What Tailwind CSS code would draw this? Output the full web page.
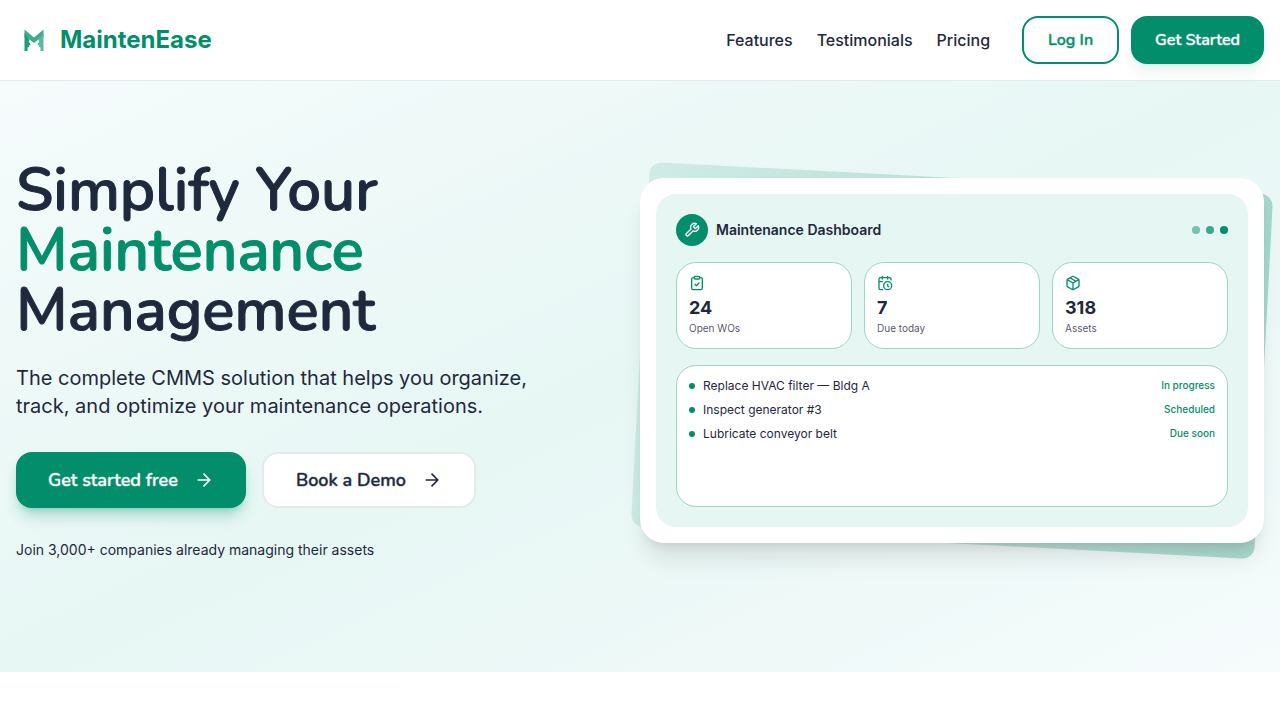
<!DOCTYPE html>
<html lang="en">
<head>
  <meta charset="UTF-8" />
  <meta name="viewport" content="width=device-width, initial-scale=1.0"/>
  <title>MaintenEase</title>
  <script src="https://cdn.jsdelivr.net/npm/@tailwindcss/browser@4"></script>
</head>
<body class="bg-white text-[#1f293d] font-['Inter',sans-serif] overflow-x-hidden">
  <header class="h-20 px-4 flex items-center justify-between bg-white relative z-10 shadow-[0_1px_0_#dfeeea]">
    <a href="#" class="flex items-center gap-2 text-2xl font-bold text-[#028e6b]">
      <svg class="size-9" viewBox="0 0 36 36" aria-hidden="true">
        <path fill="#3fab8f" d="M8.5 7.5 18 15.5l9.5-8V15l-5 2.5L18 21l-4.5-3.5-5-2.5z"/>
        <path fill="#1c9a79" d="M8.5 11v18h3v-3.5l2-1-1-1.5 2 .5-.5-2.5-1.5-1 1-2-2-2.5z"/>
        <path fill="#5cb8a0" d="M27.5 11v18h-3v-3.5l-2-1 1-1.5-2 .5.5-2.5 1.5-1-1-2 2-2.5z"/>
      </svg>
      MaintenEase
    </a>
    <div class="flex items-center gap-8">
      <nav class="flex gap-6 font-medium">
        <a href="#features">Features</a>
        <a href="#testimonials">Testimonials</a>
        <a href="#pricing">Pricing</a>
      </nav>
      <div class="flex gap-3 font-['Nunito','Lato',sans-serif] font-semibold">
        <button class="h-12 px-6 rounded-2xl border-2 border-[#028e6b] text-[#028e6b] [-webkit-text-stroke:1px_#028e6b66]">Log In</button>
        <button class="h-12 px-6 rounded-2xl bg-[#028e6b] text-white shadow-lg shadow-[#028e6b]/10 [-webkit-text-stroke:1px_#ffffff66]">Get Started</button>
      </div>
    </div>
  </header>

  <main class="px-4 pt-20 pb-28 bg-linear-to-br from-[#f6fbfc] via-[#e6f7f4] via-50% to-[#f6fbfc]">
    <div class="grid grid-cols-2 items-center">
      <section>
        <h1 class="font-['Nunito','Lato',sans-serif] text-6xl leading-none font-semibold [-webkit-text-stroke:1px]">Simplify Your<br/><span class="text-[#028e6b]">Maintenance</span><br/>Management</h1>
        <p class="mt-6 text-xl max-w-[540px]">The complete CMMS solution that helps you organize, track, and optimize your maintenance operations.</p>
        <div class="mt-8 flex gap-4 font-['Nunito','Lato',sans-serif] text-lg font-semibold">
          <button class="h-14 px-8 flex items-center gap-4 rounded-2xl bg-[#028e6b] text-white shadow-lg shadow-[#028e6b]/30 [-webkit-text-stroke:1px_#ffffff66]">
            Get started free
            <svg class="size-5" viewBox="0 0 24 24" fill="none" stroke="currentColor" stroke-width="2" stroke-linecap="round" stroke-linejoin="round" aria-hidden="true"><path d="M5 12h14M12 5l7 7-7 7"/></svg>
          </button>
          <button class="h-14 px-8 flex items-center gap-4 rounded-2xl bg-white border-2 border-[#e2ecea] [-webkit-text-stroke:1px_#1f293d66]">
            Book a Demo
            <svg class="size-5" viewBox="0 0 24 24" fill="none" stroke="currentColor" stroke-width="2" stroke-linecap="round" stroke-linejoin="round" aria-hidden="true"><path d="M5 12h14M12 5l7 7-7 7"/></svg>
          </button>
        </div>
        <p class="mt-8 text-sm">Join 3,000+ companies already managing their assets</p>
      </section>

      <section class="relative">
        <div class="absolute inset-0 rotate-3 rounded-xl bg-linear-to-r from-[#028e6b]/12 to-[#028e6b]/30"></div>
        <div class="relative p-4 rounded-3xl bg-white shadow-[0_20px_25px_-5px_#0000001a,0_8px_10px_-6px_#0000001a]">
          <div class="aspect-video p-5 flex flex-col gap-4 rounded-[20px] bg-[#e6f6f2]">
            <div class="flex items-center gap-2">
              <span class="size-8 rounded-full bg-[#028e6b] text-white flex items-center justify-center">
                <svg class="size-4" viewBox="0 0 24 24" fill="none" stroke="currentColor" stroke-width="2" stroke-linecap="round" stroke-linejoin="round" aria-hidden="true"><path d="M14.7 6.3a1 1 0 0 0 0 1.4l1.6 1.6a1 1 0 0 0 1.4 0l3.77-3.77a6 6 0 0 1-7.94 7.94l-6.91 6.91a2.12 2.12 0 0 1-3-3l6.91-6.91a6 6 0 0 1 7.94-7.94l-3.76 3.76z"/></svg>
              </span>
              <h2 class="text-sm font-semibold">Maintenance Dashboard</h2>
              <div class="ml-auto flex gap-1.5">
                <span class="size-2 rounded-full bg-[#028e6b]/50"></span>
                <span class="size-2 rounded-full bg-[#028e6b]/75"></span>
                <span class="size-2 rounded-full bg-[#028e6b]"></span>
              </div>
            </div>

            <div class="grid grid-cols-3 gap-3">
              <div class="p-3 rounded-[20px] bg-white border border-[#9bd6c6]">
                <svg class="size-4 text-[#028e6b]" viewBox="0 0 24 24" fill="none" stroke="currentColor" stroke-width="2" stroke-linecap="round" stroke-linejoin="round" aria-hidden="true"><rect width="8" height="4" x="8" y="2" rx="1"/><path d="M16 4h2a2 2 0 0 1 2 2v14a2 2 0 0 1-2 2H6a2 2 0 0 1-2-2V6a2 2 0 0 1 2-2h2M9 14l2 2 4-4"/></svg>
                <div class="mt-1 text-lg leading-[26px] font-bold">24</div>
                <div class="text-[10px] leading-[15px] text-[#1f293d]/80">Open WOs</div>
              </div>
              <div class="p-3 rounded-[20px] bg-white border border-[#9bd6c6]">
                <svg class="size-4 text-[#028e6b]" viewBox="0 0 24 24" fill="none" stroke="currentColor" stroke-width="2" stroke-linecap="round" stroke-linejoin="round" aria-hidden="true"><path d="M21 7.5V6a2 2 0 0 0-2-2H5a2 2 0 0 0-2 2v14a2 2 0 0 0 2 2h3.5M16 2v4M8 2v4M3 10h5M17.5 17.5 16 16.3V14"/><circle cx="16" cy="16" r="6"/></svg>
                <div class="mt-1 text-lg leading-[26px] font-bold">7</div>
                <div class="text-[10px] leading-[15px] text-[#1f293d]/80">Due today</div>
              </div>
              <div class="p-3 rounded-[20px] bg-white border border-[#9bd6c6]">
                <svg class="size-4 text-[#028e6b]" viewBox="0 0 24 24" fill="none" stroke="currentColor" stroke-width="2" stroke-linecap="round" stroke-linejoin="round" aria-hidden="true"><path d="M11 21.73a2 2 0 0 0 2 0l7-4A2 2 0 0 0 21 16V8a2 2 0 0 0-1-1.73l-7-4a2 2 0 0 0-2 0l-7 4A2 2 0 0 0 3 8v8a2 2 0 0 0 1 1.73zM12 22V12M3.3 7 12 12l8.7-5M7.5 4.27l9 5.15"/></svg>
                <div class="mt-1 text-lg leading-[26px] font-bold">318</div>
                <div class="text-[10px] leading-[15px] text-[#1f293d]/80">Assets</div>
              </div>
            </div>

            <ul class="flex-1 p-3 flex flex-col gap-2 rounded-[20px] bg-white border border-[#9bd6c6] text-xs">
              <li class="flex items-center gap-2">
                <span class="size-1.5 rounded-full bg-[#028e6b]"></span>
                Replace HVAC filter — Bldg A
                <span class="ml-auto text-[10px] font-medium text-[#028e6b]">In progress</span>
              </li>
              <li class="flex items-center gap-2">
                <span class="size-1.5 rounded-full bg-[#028e6b]"></span>
                Inspect generator #3
                <span class="ml-auto text-[10px] font-medium text-[#028e6b]">Scheduled</span>
              </li>
              <li class="flex items-center gap-2">
                <span class="size-1.5 rounded-full bg-[#028e6b]"></span>
                Lubricate conveyor belt
                <span class="ml-auto text-[10px] font-medium text-[#028e6b]">Due soon</span>
              </li>
            </ul>
          </div>
        </div>
      </section>
    </div>
  </main>
</body>
</html>
